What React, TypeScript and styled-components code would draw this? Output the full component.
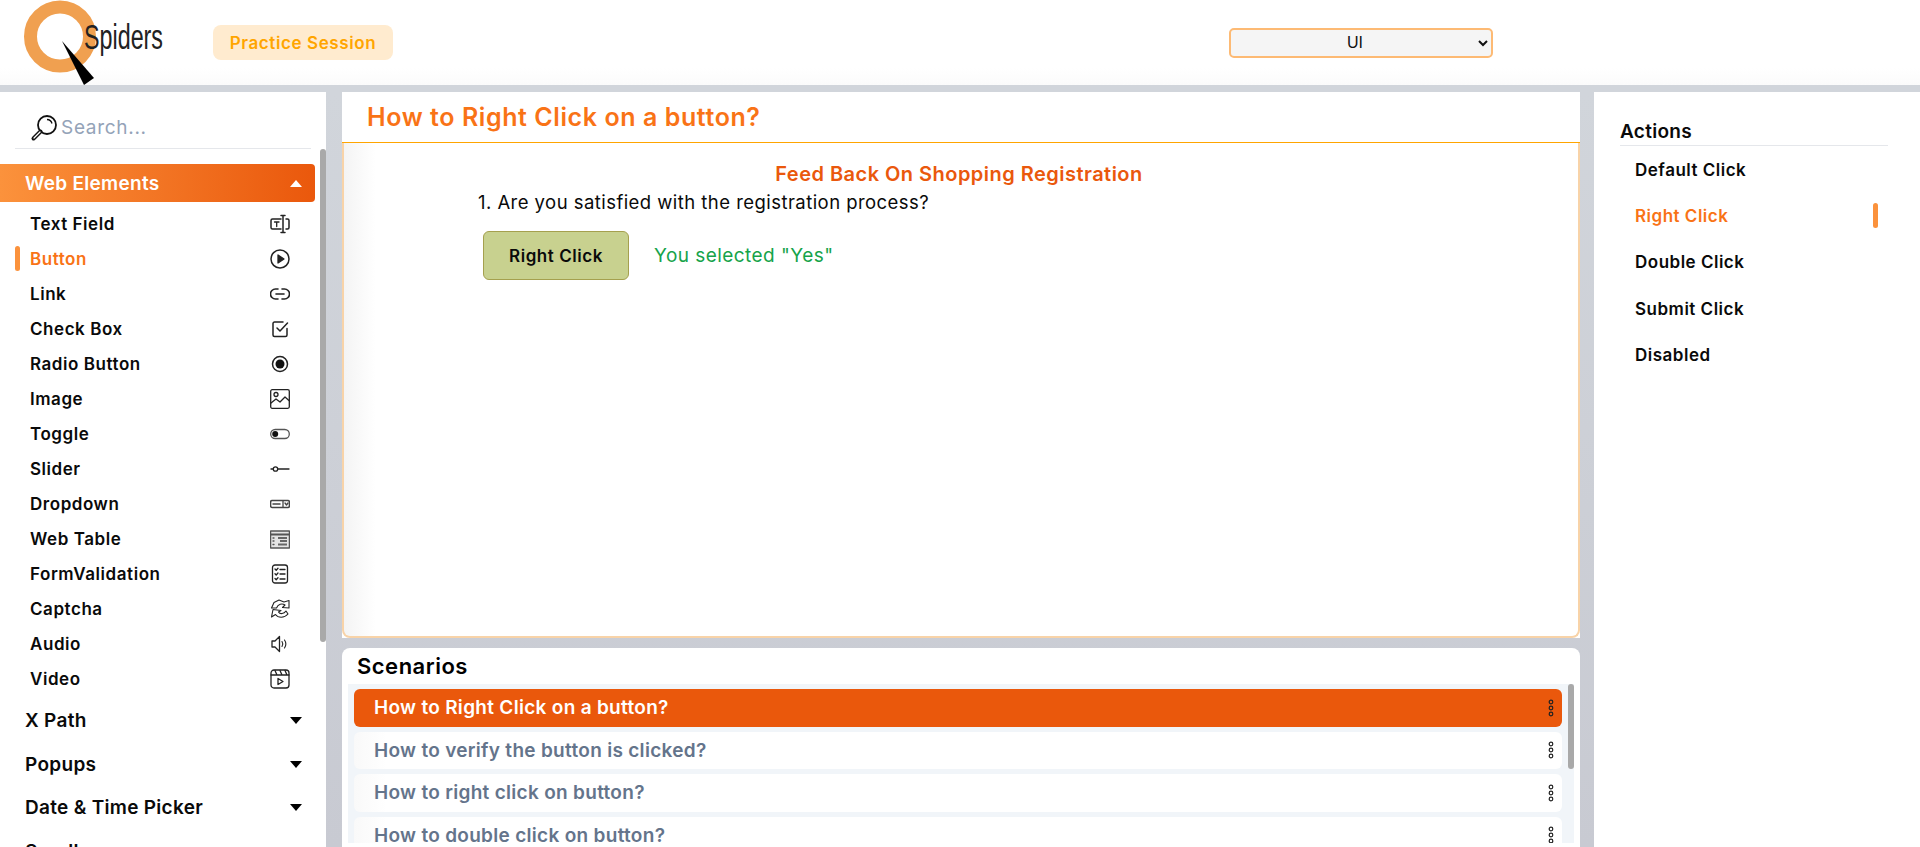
import styled, { createGlobalStyle } from "styled-components";
import type { ReactNode } from "react";

const GlobalStyle = createGlobalStyle`
  html, body {
    margin: 0;
    padding: 0;
    height: 100%;
    overflow: hidden;
    font-family: "Inter", "Noto Sans", sans-serif;
  }
  * {
    box-sizing: border-box;
  }
`;

const Page = styled.div`
  height: 100vh;
  display: flex;
  flex-direction: column;
  background: #d1d5db;
`;

const Header = styled.header`
  height: 85px;
  flex-shrink: 0;
  display: flex;
  align-items: center;
  background: linear-gradient(180deg, #fff 80%, #fbfbfb 100%);
`;

const Logo = styled.svg`
  width: 170px;
  height: 85px;
  flex-shrink: 0;
`;

const Badge = styled.div`
  margin-left: 43px;
  width: 180px;
  height: 35px;
  display: flex;
  align-items: center;
  justify-content: center;
  background: #ffebcf;
  border-radius: 8px;
  color: #ffa500;
  font-size: 17px;
  font-weight: 600;
  letter-spacing: 0.6px;
`;

const ModuleSelect = styled.select`
  margin-left: 836px;
  width: 264px;
  height: 30px;
  background: #f5f5f5;
  border: 2px solid #fdba74;
  border-radius: 5px;
  font-family: "Liberation Sans", Arial, sans-serif;
  font-size: 16px;
  color: #111;
  text-align: center;
`;

const Columns = styled.div`
  flex: 1;
  min-height: 0;
  margin-top: 7px;
  display: flex;
  background: linear-gradient(180deg, #d1d5db 0%, #c8cad2 100%);
`;

const Sidebar = styled.aside`
  width: 326px;
  flex-shrink: 0;
  background: #fff;
  display: flex;
  flex-direction: column;
  min-height: 0;
`;

const SearchRow = styled.div`
  height: 57px;
  flex-shrink: 0;
  margin: 0 15px;
  padding: 15px 0 0 15px;
  display: flex;
  align-items: center;
  gap: 3px;
  border-bottom: 1px solid #e5e7eb;
`;

const SearchInput = styled.input`
  border: none;
  outline: none;
  flex: 1;
  min-width: 0;
  font-family: inherit;
  font-size: 19px;
  padding: 0;
  letter-spacing: 0.7px;
  &::placeholder {
    color: #94a3b8;
    opacity: 1;
  }
`;

const ScrollArea = styled.div`
  position: relative;
  flex: 1;
  min-height: 0;
  overflow: hidden;
`;

const ScrollThumb = styled.div<{ $height: number }>`
  position: absolute;
  top: 0;
  right: 0;
  width: 6px;
  height: ${({ $height }) => $height}px;
  background: #a9a9a9;
  border-radius: 3px;
`;

const SideNav = styled.nav`
  padding-top: 15px;
`;

const GroupRow = styled.div<{ $open?: boolean }>`
  height: ${({ $open }) => ($open ? "38px" : "43.5px")};
  width: 315px;
  padding: 0 13px 0 25px;
  display: flex;
  align-items: center;
  justify-content: space-between;
  font-size: 19px;
  font-weight: 600;
  letter-spacing: 0.3px;
  color: ${({ $open }) => ($open ? "#fff" : "#0a0a0a")};
  background: ${({ $open }) =>
    $open ? "linear-gradient(90deg, #fb923c 0%, #ea580c 100%)" : "transparent"};
  border-radius: 0 4px 4px 0;
`;

const Caret = styled.span<{ $up?: boolean; $white?: boolean }>`
  width: 0;
  height: 0;
  border-left: 6px solid transparent;
  border-right: 6px solid transparent;
  ${({ $up, $white }) =>
    $up
      ? `border-bottom: 7px solid ${$white ? "#fff" : "#000"};`
      : `border-top: 7px solid ${$white ? "#fff" : "#000"};`}
`;

const ItemList = styled.ul`
  list-style: none;
  margin: 0 0 3px;
  padding: 4px 0 0;
`;

const Item = styled.li<{ $active?: boolean }>`
  position: relative;
  height: 35px;
  padding: 0 36px 0 30px;
  display: flex;
  align-items: center;
  justify-content: space-between;
  font-size: 17px;
  font-weight: 600;
  letter-spacing: 0.55px;
  color: ${({ $active }) => ($active ? "#f97316" : "#0a0a0a")};
  ${({ $active }) =>
    $active &&
    `&::before {
      content: "";
      position: absolute;
      left: 15px;
      top: 5px;
      width: 5px;
      height: 25px;
      border-radius: 3px;
      background: #fb923c;
    }`}
`;

const IconSvg = styled.svg`
  width: 20px;
  height: 20px;
  fill: none;
  stroke: #222;
  stroke-width: 1.3;
  stroke-linecap: round;
  stroke-linejoin: round;
  flex-shrink: 0;
`;

const MainColumn = styled.main`
  flex: 1;
  min-width: 0;
  margin: 0 14px 0 16px;
  display: flex;
  flex-direction: column;
  gap: 10px;
  min-height: 0;
`;

const Card = styled.section`
  height: 546px;
  flex-shrink: 0;
  display: flex;
  flex-direction: column;
  background: #fff;
`;

const CardTitle = styled.h1`
  margin: 0;
  height: 51px;
  flex-shrink: 0;
  padding-left: 25px;
  display: flex;
  align-items: center;
  border-bottom: 1px solid #ffa500;
  color: #f97316;
  font-size: 25px;
  font-weight: 600;
  letter-spacing: 0.58px;
`;

const CardBody = styled.div`
  flex: 1;
  padding-top: 19px;
  border: solid #f8d3a8;
  border-width: 0 2px 2px;
  border-radius: 0 0 8px 8px;
  background: linear-gradient(90deg, #f4f4f4 0%, #fff 32px);
`;

const FormHeading = styled.h2`
  margin: 0;
  text-align: center;
  padding-right: 4px;
  color: #ea580c;
  font-size: 20px;
  line-height: 24px;
  font-weight: 600;
  letter-spacing: 0.47px;
`;

const Question = styled.p`
  margin: 3px 0 0 134px;
  font-size: 18.5px;
  line-height: 26px;
  color: #0a0a0a;
  letter-spacing: 0.45px;
`;

const AnswerRow = styled.div`
  margin: 16px 0 0 139px;
  display: flex;
  align-items: center;
  gap: 25px;
`;

const RightClickButton = styled.button`
  width: 146px;
  height: 49px;
  background: #c8d18f;
  border: 1px solid #a5a04e;
  border-radius: 6px;
  font-family: inherit;
  font-size: 17px;
  font-weight: 600;
  color: #0a0a0a;
  letter-spacing: 0.55px;
`;

const Result = styled.span`
  color: #16a34a;
  font-size: 19px;
  letter-spacing: 0.45px;
`;

const ScenarioPanel = styled.section`
  flex: 1;
  min-height: 0;
  display: flex;
  flex-direction: column;
  background: #fff;
  border-radius: 8px 8px 0 0;
  padding: 0 6px 4px;
`;

const ScenarioTitle = styled.h3`
  margin: 0;
  height: 36px;
  flex-shrink: 0;
  padding-left: 9px;
  display: flex;
  align-items: center;
  font-size: 22px;
  font-weight: 600;
  color: #000;
  letter-spacing: 0.5px;
`;

const ScenarioList = styled.div`
  height: 100%;
  background: #f1f5f9;
  padding: 5px 12px 0 6px;
  display: flex;
  flex-direction: column;
  gap: 5px;
`;

const ScenarioRow = styled.div<{ $active?: boolean }>`
  height: 37.5px;
  flex-shrink: 0;
  padding: 0 8px 0 20px;
  display: flex;
  align-items: center;
  justify-content: space-between;
  border-radius: 6px;
  font-size: 19px;
  font-weight: 600;
  letter-spacing: 0.3px;
  color: ${({ $active }) => ($active ? "#fff" : "#64748b")};
  background: ${({ $active }) =>
    $active ? "#ea580c" : "linear-gradient(90deg, #f9f9f9 0%, #fff 32px)"};
`;

const DotsIcon = styled.svg`
  width: 6px;
  height: 18px;
  fill: none;
  stroke: #222;
  stroke-width: 1.2;
`;

const ActionsPanel = styled.aside`
  width: 326px;
  flex-shrink: 0;
  background: #fff;
  padding: 25px 32px 0 26px;
`;

const ActionsTitle = styled.h3`
  margin: 0;
  height: 29px;
  display: flex;
  align-items: center;
  border-bottom: 1px solid #e5e7eb;
  font-size: 19px;
  font-weight: 600;
  color: #0a0a0a;
  letter-spacing: 0.3px;
`;

const ActionList = styled.ul`
  list-style: none;
  margin: 0;
  padding: 1px 0 0;
`;

const ActionItem = styled.li<{ $active?: boolean }>`
  position: relative;
  height: 46.2px;
  padding-left: 15px;
  display: flex;
  align-items: center;
  font-size: 17px;
  font-weight: 600;
  letter-spacing: 0.5px;
  color: ${({ $active }) => ($active ? "#f97316" : "#0a0a0a")};
  ${({ $active }) =>
    $active &&
    `&::after {
      content: "";
      position: absolute;
      right: 10px;
      top: 10px;
      width: 5px;
      height: 25px;
      border-radius: 3px;
      background: #fb923c;
    }`}
`;

const Icon = ({ children }: { children: ReactNode }) => (
  <IconSvg viewBox="0 0 20 20">{children}</IconSvg>
);

const icons: Record<string, ReactNode> = {
  text: (
    <>
      <path d="M11 5H2.500A1.500 1.500 0 0 0 1 6.500v7A1.500 1.500 0 0 0 2.500 15H11" strokeWidth="1.500" />
      <path d="M13 1.500v17M11 1.500h4M11 18.500h4" strokeWidth="1.500" />
      <path d="M16 5h1.500A1.500 1.500 0 0 1 19 6.500v7a1.500 1.500 0 0 1-1.500 1.500H16" strokeWidth="1.500" />
      <path d="M4.500 8h4.500M6.700 8v4.500" />
    </>
  ),
  button: (
    <>
      <circle cx="10" cy="10" r="9" strokeWidth="1.500" />
      <path d="M8 6l6 4-6 4z" fill="#222" />
    </>
  ),
  link: (
    <>
      <path d="M8 5H5.500a5 5 0 0 0 0 10H8M12 5h2.500a5 5 0 0 1 0 10H12" strokeWidth="1.600" />
      <path d="M6 10h8" strokeWidth="1.600" />
    </>
  ),
  check: (
    <>
      <path d="M17 9.500V16a1.500 1.500 0 0 1-1.500 1.500h-11A1.500 1.500 0 0 1 3 16V4.500A1.500 1.500 0 0 1 4.500 3H13" strokeWidth="1.500" />
      <path d="M7 9l3 3 7.500-8" strokeWidth="1.500" />
    </>
  ),
  radio: (
    <>
      <circle cx="10" cy="10" r="7.500" strokeWidth="1.500" />
      <circle cx="10" cy="10" r="4.500" fill="#111" stroke="none" />
    </>
  ),
  image: (
    <>
      <rect x="0.700" y="0.700" width="18.600" height="18.600" rx="1.500" />
      <circle cx="6" cy="5.500" r="2" />
      <path d="M1 14l5-4 4 3 5-5 4.500 4" />
    </>
  ),
  toggle: (
    <>
      <rect x="0.700" y="5.500" width="18.600" height="9" rx="4.500" stroke="#555" />
      <circle cx="5.200" cy="10" r="3" fill="#111" stroke="none" />
    </>
  ),
  slider: (
    <>
      <circle cx="5.500" cy="10" r="2.200" />
      <path d="M1 10h2.300M7.700 10H19" />
    </>
  ),
  dropdown: (
    <>
      <rect x="0.600" y="6.500" width="18.800" height="7" rx="1.500" strokeWidth="1.500" stroke="#444" />
      <path d="M3 10h7" strokeWidth="1.500" stroke="#444" />
      <path d="M13 7v6M15 9l1.500 2 1.500-2" stroke="#444" />
    </>
  ),
  table: (
    <>
      <rect x="0.600" y="2" width="18.800" height="17" fill="#e4e4e4" stroke="#555" />
      <path d="M1 5.500h18" strokeWidth="2" stroke="#555" />
      <path d="M8 9h9M10 12h7M8 15.500h9" strokeWidth="2" stroke="#666" strokeLinecap="butt" />
      <path d="M3 9h2M3 12h2M3 15.500h2" strokeDasharray="1 1" stroke="#555" />
    </>
  ),
  form: (
    <>
      <rect x="2.500" y="1" width="15" height="18" rx="2.500" />
      <path d="M5 5l1.200 1.200L8 4.200M5 9.800L6.200 11 8 9M5 14.500l1.200 1.200L8 13.700" />
      <path d="M10 5.500h5M10 10h5M10 15h5" />
    </>
  ),
  captcha: (
    <>
      <path d="M1.500 9L4 3.500 9 1l5 2 5-1.500V9l-6.500-.5L15 6C12 4 8 5 6.500 9z" strokeWidth="1.100" />
      <path d="M3 10.500L1.500 18l4-2.500c2.500 3.500 8.500 4 12.500-.5l-2-3c-2 3-6 3.500-7.500 1l2.500-1.500z" strokeWidth="1.100" />
    </>
  ),
  audio: (
    <>
      <path d="M2 7h3l4.500-4.500v15L5 13H2z" />
      <path d="M12 7.500c1 1.500 1 3.500 0 5M14.500 6c1.700 2.500 1.700 5.500 0 8" strokeWidth="1.100" />
    </>
  ),
  video: (
    <>
      <rect x="1" y="1" width="18" height="18" rx="3" />
      <path d="M1 6h18M5 1.500L7 6M10 1.500L12 6M15 1.500L17 6" />
      <path d="M8 9.500l5 3-5 3z" />
    </>
  ),
};

const webElements = [
  { label: "Text Field", icon: "text" },
  { label: "Button", icon: "button", active: true },
  { label: "Link", icon: "link" },
  { label: "Check Box", icon: "check" },
  { label: "Radio Button", icon: "radio" },
  { label: "Image", icon: "image" },
  { label: "Toggle", icon: "toggle" },
  { label: "Slider", icon: "slider" },
  { label: "Dropdown", icon: "dropdown" },
  { label: "Web Table", icon: "table" },
  { label: "FormValidation", icon: "form" },
  { label: "Captcha", icon: "captcha" },
  { label: "Audio", icon: "audio" },
  { label: "Video", icon: "video" },
];

const groups = ["X Path", "Popups", "Date & Time Picker", "Scroll"];

const scenarios = [
  "How to Right Click on a button?",
  "How to verify the button is clicked?",
  "How to right click on button?",
  "How to double click on button?",
];

const actions = ["Default Click", "Right Click", "Double Click", "Submit Click", "Disabled"];

const App = () => {
  return (
    <Page>
      <GlobalStyle />
      <Header>
        <Logo viewBox="0 0 170 85">
          <circle cx="60" cy="36.500" r="29.500" fill="none" stroke="#f0a050" strokeWidth="13" />
          <path d="M62 41L94 78L84 85Z" fill="#000" />
          <text
            x="84"
            y="49"
            fontFamily="Liberation Sans, sans-serif"
            fontSize="35"
            fill="#222"
            textLength="79"
            lengthAdjust="spacingAndGlyphs"
          >
            Spiders
          </text>
        </Logo>
        <Badge>Practice Session</Badge>
        <ModuleSelect defaultValue="UI">
          <option value="UI">UI</option>
        </ModuleSelect>
      </Header>

      <Columns>
        <Sidebar>
          <SearchRow>
            <svg width="28" height="28" viewBox="0 0 28 28" fill="none" stroke="#111" strokeWidth="1.800">
              <circle cx="17" cy="11" r="9" />
              <path d="M10.500 17.500L3.500 24.500" strokeWidth="4" strokeLinecap="round" />
              <path d="M10 18L4 24" strokeWidth="1.200" stroke="#fff" strokeLinecap="round" />
              <path d="M17 5.500a5.500 5.500 0 0 1 5 4" strokeWidth="1.300" />
            </svg>
            <SearchInput placeholder="Search..." />
          </SearchRow>
          <ScrollArea>
            <SideNav>
              <GroupRow $open>
                Web Elements
                <Caret $up $white />
              </GroupRow>
              <ItemList>
                {webElements.map((item) => (
                  <Item key={item.label} $active={item.active}>
                    {item.label}
                    <Icon>{icons[item.icon]}</Icon>
                  </Item>
                ))}
              </ItemList>
              {groups.map((group) => (
                <GroupRow key={group}>
                  {group}
                  <Caret />
                </GroupRow>
              ))}
            </SideNav>
            <ScrollThumb $height={493} />
          </ScrollArea>
        </Sidebar>

        <MainColumn>
          <Card>
            <CardTitle>How to Right Click on a button?</CardTitle>
            <CardBody>
              <FormHeading>Feed Back On Shopping Registration</FormHeading>
              <Question>1. Are you satisfied with the registration process?</Question>
              <AnswerRow>
                <RightClickButton>Right Click</RightClickButton>
                <Result>You selected "Yes"</Result>
              </AnswerRow>
            </CardBody>
          </Card>

          <ScenarioPanel>
            <ScenarioTitle>Scenarios</ScenarioTitle>
            <ScrollArea>
              <ScenarioList>
                {scenarios.map((scenario, index) => (
                  <ScenarioRow key={scenario} $active={index === 0}>
                    {scenario}
                    <DotsIcon viewBox="0 0 6 18">
                      <circle cx="3" cy="3" r="1.800" />
                      <circle cx="3" cy="9" r="1.800" />
                      <circle cx="3" cy="15" r="1.800" />
                    </DotsIcon>
                  </ScenarioRow>
                ))}
              </ScenarioList>
              <ScrollThumb $height={85} />
            </ScrollArea>
          </ScenarioPanel>
        </MainColumn>

        <ActionsPanel>
          <ActionsTitle>Actions</ActionsTitle>
          <ActionList>
            {actions.map((action) => (
              <ActionItem key={action} $active={action === "Right Click"}>
                {action}
              </ActionItem>
            ))}
          </ActionList>
        </ActionsPanel>
      </Columns>
    </Page>
  );
};

export default App;
